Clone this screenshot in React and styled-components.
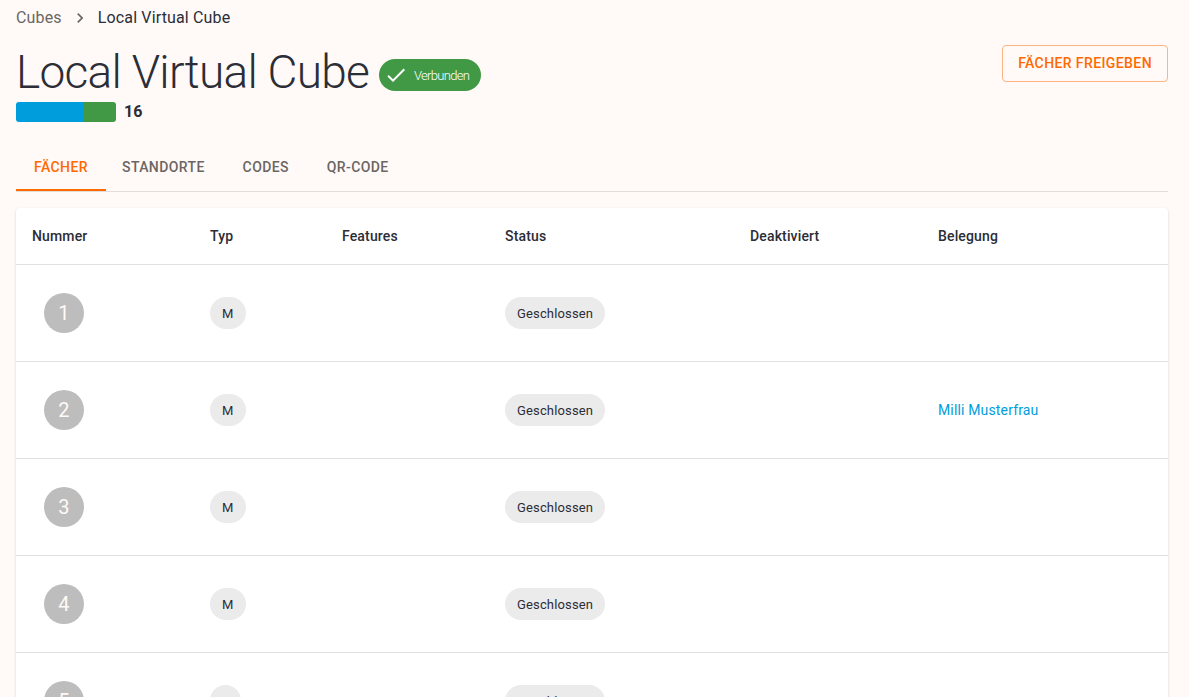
import React from "react";
import styled, { createGlobalStyle, css } from "styled-components";

const GlobalStyle = createGlobalStyle`
  *, *::before, *::after { box-sizing: border-box; }
  body {
    margin: 0;
    background: #fffaf7;
    color: #2b2d37;
    font-family: Roboto, "Liberation Sans", sans-serif;
    font-size: 14px;
    line-height: 20px;
    letter-spacing: 0.01071em;
  }
`;

const Page = styled.main`
  padding: 6px 21px 16px 16px;
`;

const Breadcrumbs = styled.nav`
  display: flex;
  align-items: center;
  gap: 8px;
  font-size: 16px;
  line-height: 24px;
  letter-spacing: 0.00938em;
`;

const BreadcrumbLink = styled.a`
  color: #6b6663;
  text-decoration: none;
`;

const SeparatorIcon = styled.svg`
  width: 20px;
  height: 20px;
  fill: #6b6663;
`;

const Header = styled.header`
  display: flex;
  align-items: flex-start;
  justify-content: space-between;
  padding-top: 14px;
`;

const TitleRow = styled.div`
  display: flex;
  align-items: center;
  gap: 10px;
  font-size: 46px;
  font-weight: 300;
  letter-spacing: -0.01562em;
`;

const Title = styled.h1`
  margin: 0;
  font-size: inherit;
  font-weight: inherit;
  line-height: 56px;
`;

const chipShape = css`
  display: inline-flex;
  align-items: center;
  height: 32px;
  border-radius: 16px;
  font-size: 13px;
`;

const ConnectionChip = styled.span`
  ${chipShape}
  gap: 6px;
  margin-top: 6px;
  padding: 0 12px 0 5px;
  background: #419945;
  color: #fff;
`;

const ChipLabel = styled.span`
  padding-top: 2px;
  line-height: 20px;
`;

const CheckIcon = styled.svg`
  width: 24px;
  height: 24px;
  fill: currentColor;
`;

const ReleaseButton = styled.button`
  margin-top: 1px;
  padding: 5px 15px 6px;
  border: 1px solid #ffb47f;
  border-radius: 4px;
  background: transparent;
  color: #ff6900;
  font: 500 14px/24px Roboto, "Liberation Sans", sans-serif;
  letter-spacing: 0.02857em;
  text-transform: uppercase;
`;

const Usage = styled.div`
  display: flex;
  align-items: center;
  gap: 8px;
  font-size: 16px;
  font-weight: 700;
  line-height: 24px;
`;

const UsageBar = styled.div`
  display: flex;
  width: 100px;
  height: 20px;
  border-radius: 3px;
  overflow: hidden;
`;

const UsagePart = styled.div`
  flex: ${({ $share }) => $share} 1 0;
  background: ${({ $color }) => $color};
`;

const Tabs = styled.div`
  display: flex;
  margin-top: 19px;
  border-bottom: 1px solid #e0dddc;
`;

const Tab = styled.button`
  min-width: 90px;
  height: 48px;
  padding: 2px 16px 0;
  border: 0;
  border-bottom: 2px solid ${({ $active }) => ($active ? "#ff6900" : "transparent")};
  background: transparent;
  color: ${({ $active }) => ($active ? "#ff6900" : "#6b6663")};
  font: 500 14px/18px Roboto, "Liberation Sans", sans-serif;
  letter-spacing: 0.02857em;
  text-transform: uppercase;
`;

const Card = styled.section`
  margin-top: 16px;
  border-radius: 4px;
  background: #fff;
  overflow: hidden;
  box-shadow: 0 2px 1px -1px rgba(0, 0, 0, 0.2), 0 1px 1px rgba(0, 0, 0, 0.14),
    0 1px 3px rgba(0, 0, 0, 0.12);
`;

const Table = styled.table`
  width: 100%;
  table-layout: fixed;
  border-collapse: separate;
  border-spacing: 0;
`;

const Column = styled.col`
  width: ${({ $width }) => $width}px;
`;

const HeadCell = styled.th`
  height: 57px;
  padding: 0 16px;
  border-bottom: 1px solid #e0e0e0;
  font-weight: 500;
  text-align: left;
`;

const Cell = styled.td`
  height: 97px;
  padding: 0 16px;
  border-bottom: 1px solid #e0e0e0;
`;

const NumberBadge = styled.span`
  display: flex;
  align-items: center;
  justify-content: center;
  width: 40px;
  height: 40px;
  margin-left: 12px;
  border-radius: 50%;
  background: #bdbdbd;
  color: #fffaf7;
  font-size: 20px;
`;

const Chip = styled.span`
  ${chipShape}
  padding: 0 12px;
  background: #ebebeb;
  vertical-align: middle;
`;

const TenantLink = styled.a`
  color: #009ddc;
  text-decoration: none;
`;

const columns = [
  { label: "Nummer", width: 178 },
  { label: "Typ", width: 132 },
  { label: "Features", width: 163 },
  { label: "Status", width: 245 },
  { label: "Deaktiviert", width: 188 },
  { label: "Belegung", width: 246 },
];

const compartments = [
  { number: 1, type: "M", status: "Geschlossen" },
  { number: 2, type: "M", status: "Geschlossen", tenant: "Milli Musterfrau" },
  { number: 3, type: "M", status: "Geschlossen" },
  { number: 4, type: "M", status: "Geschlossen" },
  { number: 5, type: "L", status: "Geschlossen" },
];

const tabs = ["Fächer", "Standorte", "Codes", "QR-Code"];

export default function App() {
  const [active, setActive] = React.useState(tabs[0]);
  return (
    <>
      <GlobalStyle />
      <Page>
        <Breadcrumbs>
          <BreadcrumbLink href="#cubes">Cubes</BreadcrumbLink>
          <SeparatorIcon viewBox="0 0 24 24" aria-hidden="true">
            <path d="M10 6L8.59 7.41 13.17 12l-4.58 4.59L10 18l6-6z" />
          </SeparatorIcon>
          <span>Local Virtual Cube</span>
        </Breadcrumbs>
        <Header>
          <TitleRow>
            <Title>Local Virtual Cube</Title>
            <ConnectionChip>
              <CheckIcon viewBox="0 0 24 24" aria-hidden="true">
                <path d="M9 16.17L4.83 12l-1.42 1.41L9 19 21 7l-1.41-1.41z" />
              </CheckIcon>
              <ChipLabel>Verbunden</ChipLabel>
            </ConnectionChip>
          </TitleRow>
          <ReleaseButton type="button">Fächer freigeben</ReleaseButton>
        </Header>
        <Usage>
          <UsageBar>
            <UsagePart $share={68} $color="#009ddc" />
            <UsagePart $share={32} $color="#419945" />
          </UsageBar>
          <span>16</span>
        </Usage>
        <Tabs role="tablist">
          {tabs.map((tab) => (
            <Tab
              key={tab}
              type="button"
              role="tab"
              aria-selected={tab === active}
              $active={tab === active}
              onClick={() => setActive(tab)}
            >
              {tab}
            </Tab>
          ))}
        </Tabs>
        <Card>
          <Table>
            <colgroup>
              {columns.map(({ label, width }) => (
                <Column key={label} $width={width} />
              ))}
            </colgroup>
            <thead>
              <tr>
                {columns.map(({ label }) => (
                  <HeadCell key={label} scope="col">{label}</HeadCell>
                ))}
              </tr>
            </thead>
            <tbody>
              {compartments.map(({ number, type, status, tenant }) => (
                <tr key={number}>
                  <Cell><NumberBadge>{number}</NumberBadge></Cell>
                  <Cell><Chip><ChipLabel>{type}</ChipLabel></Chip></Cell>
                  <Cell />
                  <Cell><Chip><ChipLabel>{status}</ChipLabel></Chip></Cell>
                  <Cell />
                  <Cell>{tenant && <TenantLink href="#tenant">{tenant}</TenantLink>}</Cell>
                </tr>
              ))}
            </tbody>
          </Table>
        </Card>
      </Page>
    </>
  );
}
